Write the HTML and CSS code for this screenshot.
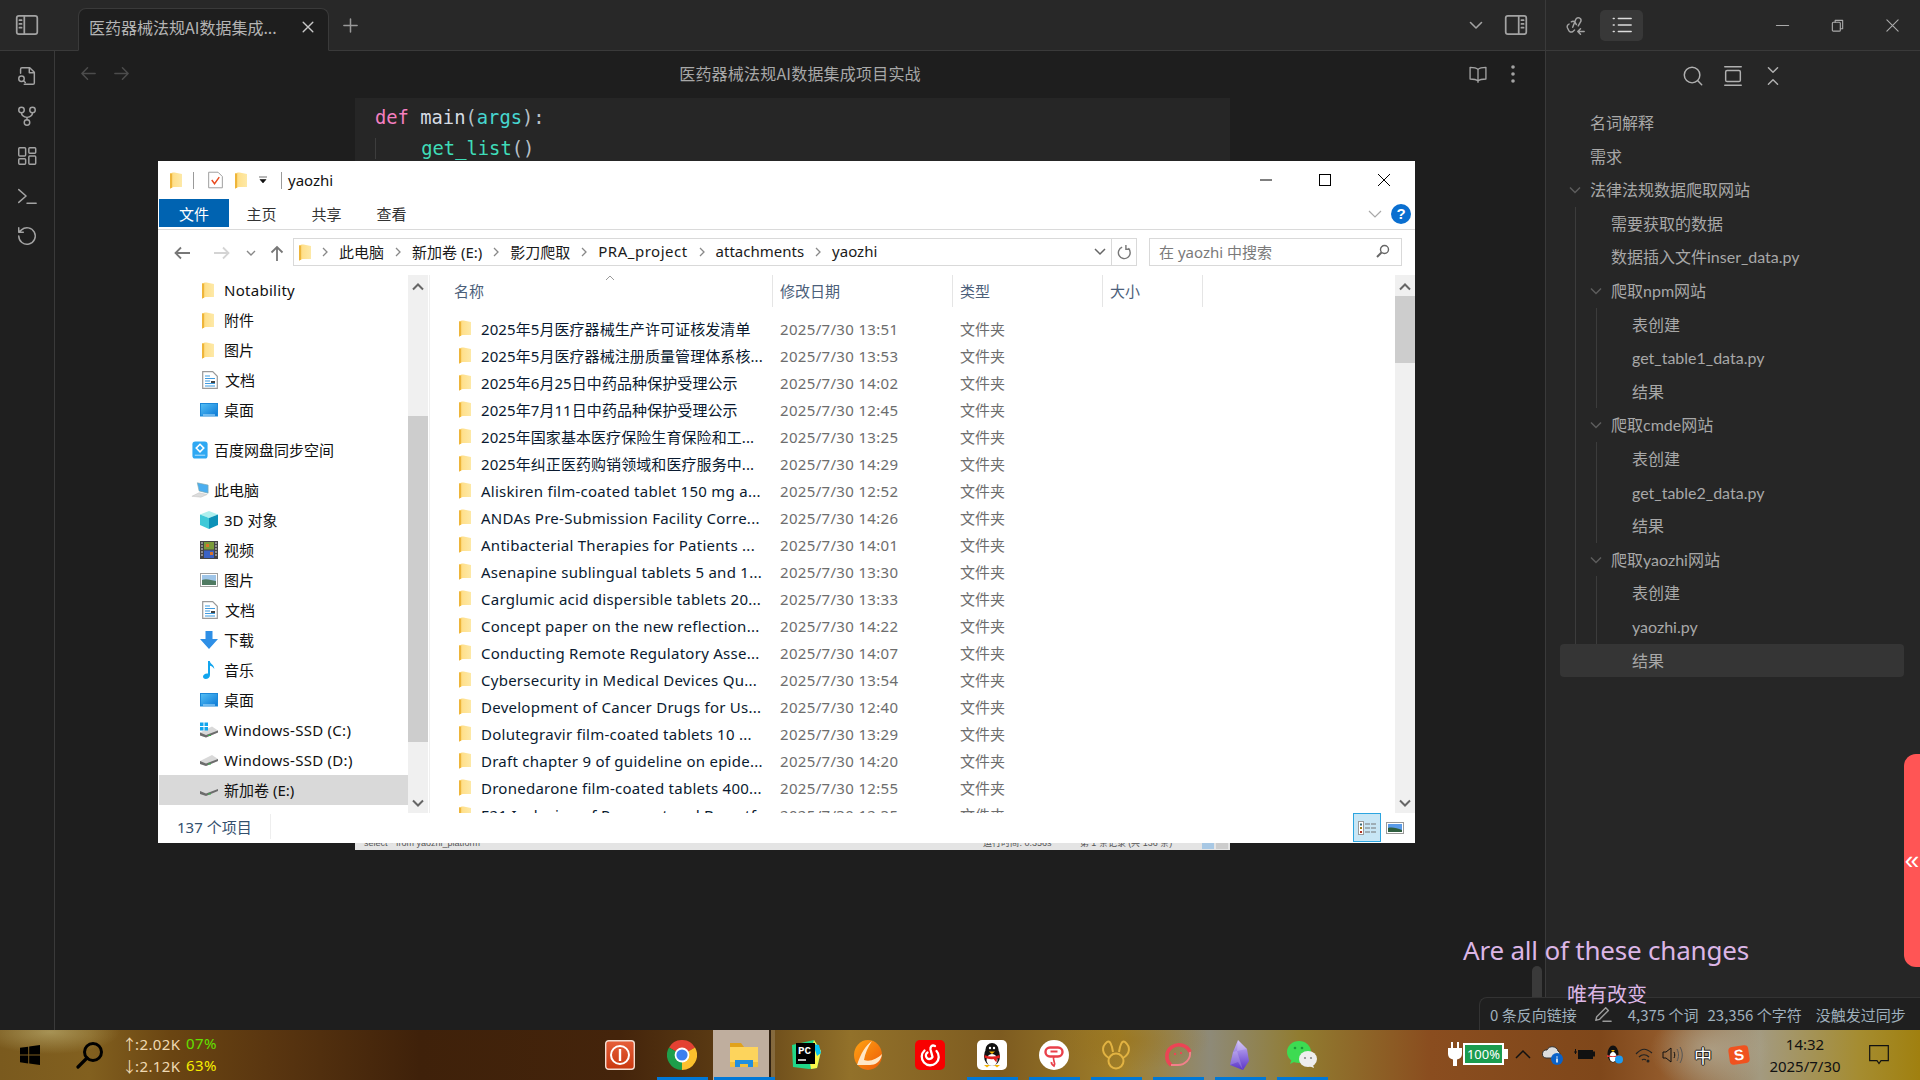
FILE: index.html
```html
<!DOCTYPE html>
<html lang="zh-CN">
<head>
<meta charset="utf-8">
<title>医药器械法规AI数据集成项目实战</title>
<link rel="stylesheet" href="styles.css">
</head>
<body>
<svg class="sprite" width="0" height="0" aria-hidden="true">
  <defs>
    <linearGradient id="gFolder" x1="0" x2="1" y1="0" y2="0"><stop offset="0" stop-color="#f3c14c"/><stop offset=".3" stop-color="#ffe08c"/><stop offset="1" stop-color="#fde9a8"/></linearGradient>
    <linearGradient id="gScreen" x1="0" x2="1" y1="0" y2="1"><stop offset="0" stop-color="#56c0f5"/><stop offset="1" stop-color="#0a78d6"/></linearGradient>
    <linearGradient id="gPower" x1="0" x2="0" y1="0" y2="1"><stop offset="0" stop-color="#e6603a"/><stop offset="1" stop-color="#c9380f"/></linearGradient>
    <linearGradient id="gLen" x1="0" x2="1" y1="0" y2="1"><stop offset="0" stop-color="#ffa313"/><stop offset="1" stop-color="#ed5b07"/></linearGradient>
    <linearGradient id="gObs" x1="0" x2="0" y1="0" y2="1"><stop offset="0" stop-color="#cdbcf7"/><stop offset="1" stop-color="#5b35c9"/></linearGradient>
    <symbol id="i-folder" viewBox="0 0 12 17"><path d="M0 1.500 3 .5h1.500L12 2v13H3.500L0 16.500z" fill="url(#gFolder)"/><path d="M0 1.500V16.500l2-.8V2z" fill="#eeb53a"/></symbol>
    <symbol id="i-doc" viewBox="0 0 16 18"><path d="M.7.7h10l4.600 4.600v12H.7z" fill="#fff" stroke="#9a9a9a" stroke-width="1.200"/><path d="M3 5h5M3 7.500h10M3 10h5M3 12.500h10M3 15h10" stroke="#3f9be0" stroke-width="1.100"/><path d="M9 10h4v2H9z" fill="#444"/></symbol>
    <symbol id="i-desk" viewBox="0 0 18 14"><rect x=".5" y=".5" width="17" height="12.500" fill="url(#gScreen)" stroke="#1c88d8"/><path d="M3 12h12" stroke="#bfe6ff"/></symbol>
    <symbol id="i-baidu" viewBox="0 0 17 19"><rect x=".5" y=".5" width="16" height="18" rx="3" fill="#2fa8f2"/><path d="M8.500 3.500 12.500 7.500 8.500 11.500 4.500 7.500z" fill="none" stroke="#fff" stroke-width="1.600"/><path d="M3 15h11" stroke="#bfe6ff"/></symbol>
    <symbol id="i-pc" viewBox="0 0 20 18"><path d="M7 1l12 2.500v9L9 10z" fill="#4aaef0" stroke="#8aa" stroke-width=".7"/><path d="M1 16 9 12l9 2-7 3z" fill="#dcdcdc" stroke="#bbb" stroke-width=".5"/></symbol>
    <symbol id="i-cube" viewBox="0 0 18 18"><path d="M9 0 18 3.500 9 7 0 3.500z" fill="#aef0ee"/><path d="M0 3.500 9 7v11L0 14z" fill="#3fc9d8"/><path d="M18 3.500 9 7v11l9-4z" fill="#0d92b8"/></symbol>
    <symbol id="i-film" viewBox="0 0 18 18"><rect width="18" height="18" fill="#444"/><path d="M4 1h10v7.500H4z" fill="#7a9b3a"/><path d="M4 9.500h10V17H4z" fill="#3a62c4"/><path d="M6 3h3v3H6zM10 11h3v3h-3z" fill="#d9752a"/><path d="M1 2h2M1 5h2M1 8h2M1 11h2M1 14h2M15 2h2M15 5h2M15 8h2M15 11h2M15 14h2" stroke="#ddd"/></symbol>
    <symbol id="i-pic" viewBox="0 0 18 14"><rect x=".5" y=".5" width="17" height="13" fill="#fff" stroke="#a0a0a0"/><path d="M2 2h14v10H2z" fill="#9fc5e8"/><path d="M2 7c4-2 9 0 14 1v4H2z" fill="#4f7a62"/></symbol>
    <symbol id="i-down" viewBox="0 0 18 18"><path d="M5.500 0h7v8H18L9 18 0 8h5.500z" fill="#2e8fe6"/></symbol>
    <symbol id="i-music" viewBox="0 0 12 18"><path d="M5 0h1.800c.3 3 4.500 3.500 4.500 8-1-2-3-3-4.300-3.200V14c0 2.500-2.200 4-4.300 4C1 18 0 17 0 15.500 0 13.500 2.500 12 5 12.500z" fill="#12a5ee"/></symbol>
    <symbol id="i-drive" viewBox="0 0 18 12"><path d="M0 7 12 1l6 4v2L6 12 0 10z" fill="#d9d9d9"/><path d="M0 7l6 2.500L18 5v2L6 12 0 10z" fill="#6c6c6c"/><path d="M8 9.500h3v1H8z" fill="#38b24a"/></symbol>
    <symbol id="i-drive-c" viewBox="0 0 18 15"><path d="M0 10 12 4l6 4v2L6 15 0 13z" fill="#d9d9d9"/><path d="M0 10l6 2.500L18 8v2L6 15 0 13z" fill="#6c6c6c"/><path d="M8 12.500h3v1H8z" fill="#38b24a"/><path d="M0 0h3.500v3.500H0zM4.500 0H8v3.500H4.500zM0 4.500h3.500V8H0zM4.500 4.500H8V8H4.500z" fill="#12a5ee"/></symbol>
    <symbol id="i-win" viewBox="0 0 20 20"><path d="M0 2.800 8.200 1.700v7.900H0zM9.200 1.500 20 0v9.600H9.200zM0 10.500h8.200v7.900L0 17.200zM9.200 10.500H20V20L9.200 18.500z"/></symbol>
  </defs>
</svg>

<div class="app">
  <header class="titlebar">
    <div class="tb-left">
      <button class="ico-btn side-toggle"><svg class="ic" viewBox="0 0 24 24"><rect x="2.500" y="3.500" width="19" height="17" rx="2"/><path d="M9.500 3.500v17M5 7.500h2M5 11h2M5 14.500h2"/></svg></button>
      <div class="tab"><span class="tab-name">医药器械法规AI数据集成...</span><svg class="ic tab-x" viewBox="0 0 16 16"><path d="M2.500 2.500l11 11M13.500 2.500l-11 11"/></svg></div>
      <svg class="ic tab-plus" viewBox="0 0 18 18"><path d="M9 2v14M2 9h14"/></svg>
      <span class="spacer"></span>
      <svg class="ic tab-drop" viewBox="0 0 16 16"><path d="M2.500 5.500 8 11l5.500-5.500"/></svg>
      <svg class="ic tab-panel" viewBox="0 0 24 24"><rect x="2.500" y="3.500" width="19" height="17" rx="2"/><path d="M14.500 3.500v17M17 7.500h2M17 11h2M17 14.500h2"/></svg>
    </div>
    <div class="tb-right">
      <svg class="ic link-ic" viewBox="0 0 24 24"><path d="M9.500 14.500 13 5.500a3 3 0 0 1 5.500 2.200L15.500 13M5.500 11a3 3 0 0 0-1.800 4l1.500 3a3 3 0 0 0 4.300 1.300l2-1.800M8 8.500a3 3 0 0 1 4 .5l1.500 2.500M15 19h7M15 19l3-3M15 19l3 3"/></svg>
      <span class="list-btn"><svg class="ic" viewBox="0 0 24 24"><path d="M8 5h14M8 12h14M8 19h14M2.500 5h1M2.500 12h1M2.500 19h1"/></svg></span>
      <span class="spacer"></span>
      <span class="win-btn"><svg class="ic" viewBox="0 0 16 16"><path d="M1.500 8h13"/></svg></span>
      <span class="win-btn"><svg class="ic" viewBox="0 0 16 16"><rect x="2.500" y="4.500" width="8.500" height="9.500" rx="1"/><path d="M5.500 4.500V2.500h8v9H11"/></svg></span>
      <span class="win-btn"><svg class="ic" viewBox="0 0 16 16"><path d="M2 2l12 12M14 2 2 14"/></svg></span>
    </div>
  </header>

  <div class="workspace">
    <nav class="ribbon">
      <svg class="ic" viewBox="0 0 24 24"><path d="M5 9V4.500A1.500 1.500 0 0 1 6.500 3H15l5 5v11.500a1.500 1.500 0 0 1-1.500 1.500H9M14.500 3v5.500H20"/><circle cx="6" cy="15" r="3"/><path d="m8.200 17.200 2 2"/></svg>
      <svg class="ic" viewBox="0 0 24 24"><circle cx="6" cy="5.500" r="3"/><circle cx="18" cy="5.500" r="3"/><circle cx="12" cy="19" r="3"/><path d="M6 8.500c0 3 2 4.500 6 5v2.500M18 8.500c0 3-2 4.500-6 5"/></svg>
      <svg class="ic" viewBox="0 0 24 24"><rect x="3" y="3" width="7.500" height="9" rx="1"/><rect x="14" y="3" width="7.500" height="6" rx="1"/><rect x="3" y="15" width="7.500" height="6" rx="1"/><rect x="14" y="12" width="7.500" height="9" rx="1"/></svg>
      <svg class="ic" viewBox="0 0 24 24"><path d="m3 5 8 7-8 7M12 20h10"/></svg>
      <svg class="ic" viewBox="0 0 24 24"><path d="M3 12a9 9 0 1 0 3-6.700L3 8M3 3v5h5"/></svg>
    </nav>

    <main class="editor">
      <div class="view-head">
        <svg class="ic nav-a" viewBox="0 0 18 18"><path d="M16 9H2M8 3 2 9l6 6"/></svg>
        <svg class="ic nav-a" viewBox="0 0 18 18"><path d="M2 9h14M10 3l6 6-6 6"/></svg>
        <span class="view-title">医药器械法规AI数据集成项目实战</span>
        <svg class="ic book" viewBox="0 0 24 24"><path d="M12 6.500c-2-2-5-2.500-9.500-2.500v14c4.500 0 7.500.5 9.500 2.500 2-2 5-2.500 9.500-2.500V4c-4.500 0-7.500.5-9.500 2.500zM12 6.500V22"/></svg>
        <svg class="dots" viewBox="0 0 6 20"><circle cx="3" cy="3" r="1.800"/><circle cx="3" cy="10" r="1.800"/><circle cx="3" cy="17" r="1.800"/></svg>
      </div>
      <div class="code-block">
        <pre class="code"><span class="k">def</span> <span class="fn">main</span>(<span class="arg">args</span>):
<span class="indent">    </span><span class="call">get_list</span>()</pre>
        <div class="strip">
          <span class="sql">select * from yaozhi_platform</span>
          <span class="run">运行时间: 0.356s</span>
          <span class="rec">第 1 条记录 (共 136 条)</span>
          <span class="strip-b on"></span><span class="strip-b"></span>
        </div>
      </div>
    </main>

    <aside class="outline">
      <div class="outline-tools">
        <svg class="ic" viewBox="0 0 24 24"><circle cx="11" cy="11" r="8.500"/><path d="m17.500 17.500 4 4"/></svg>
        <svg class="ic" viewBox="0 0 24 24"><path d="M3 2h18M3 22h18"/><rect x="4" y="6" width="16" height="12" rx="1.500"/></svg>
        <svg class="ic" viewBox="0 0 24 24"><path d="m7 3 5 5 5-5M7 21l5-5 5 5"/></svg>
      </div>
      <div class="toc">
        <div class="row">名词解释</div>
        <div class="row">需求</div>
        <div class="row"><svg class="chev" viewBox="0 0 12 12"><path d="M1 3.500 6 8.500l5-5"/></svg>法律法规数据爬取网站</div>
        <div class="kids">
          <div class="row">需要获取的数据</div>
          <div class="row">数据插入文件inser_data.py</div>
          <div class="row"><svg class="chev" viewBox="0 0 12 12"><path d="M1 3.500 6 8.500l5-5"/></svg>爬取npm网站</div>
          <div class="kids">
            <div class="row">表创建</div>
            <div class="row">get_table1_data.py</div>
            <div class="row">结果</div>
          </div>
          <div class="row"><svg class="chev" viewBox="0 0 12 12"><path d="M1 3.500 6 8.500l5-5"/></svg>爬取cmde网站</div>
          <div class="kids">
            <div class="row">表创建</div>
            <div class="row">get_table2_data.py</div>
            <div class="row">结果</div>
          </div>
          <div class="row"><svg class="chev" viewBox="0 0 12 12"><path d="M1 3.500 6 8.500l5-5"/></svg>爬取yaozhi网站</div>
          <div class="kids">
            <div class="row">表创建</div>
            <div class="row">yaozhi.py</div>
            <div class="row current">结果</div>
          </div>
        </div>
      </div>
      <div class="scroll-nub"></div>
    </aside>
  </div>
</div>

<section class="explorer">
  <div class="ex-title">
    <svg class="fld"><use href="#i-folder"/></svg>
    <span class="qsep"></span>
    <svg class="qdoc" viewBox="0 0 16 18"><path d="M.7.7h10l4.600 4.600v12H.7z" fill="#fff" stroke="#999"/><path d="m4 9 3 4 5-7" fill="none" stroke="#e8491d" stroke-width="1.500"/></svg>
    <svg class="fld"><use href="#i-folder"/></svg>
    <svg class="qdrop" viewBox="0 0 8 8"><path d="M0 1h8M1 3.500h6L4 7z" fill="#111" stroke="#111" stroke-width=".6"/></svg>
    <span class="qsep"></span>
    <span class="ex-name">yaozhi</span>
    <span class="spacer"></span>
    <span class="cap"><svg viewBox="0 0 14 14"><path d="M1 7h12"/></svg></span>
    <span class="cap"><svg viewBox="0 0 14 14"><rect x="1.500" y="1.500" width="11" height="11"/></svg></span>
    <span class="cap"><svg viewBox="0 0 14 14"><path d="m1 1 12 12M13 1 1 13"/></svg></span>
  </div>
  <div class="ex-ribbon">
    <span class="rtab file">文件</span><span class="rtab">主页</span><span class="rtab">共享</span><span class="rtab">查看</span>
    <span class="spacer"></span>
    <svg class="r-chev" viewBox="0 0 14 8"><path d="m1 1 6 6 6-6"/></svg>
    <span class="help">?</span>
  </div>
  <div class="ex-address">
    <svg class="nav-ic" viewBox="0 0 16 14"><path d="M16 7H2M7 1.500 1.500 7 7 12.500"/></svg>
    <svg class="nav-ic off" viewBox="0 0 16 14"><path d="M0 7h14M9 1.500 14.500 7 9 12.500"/></svg>
    <svg class="nav-drop" viewBox="0 0 10 6"><path d="m1 1 4 4 4-4"/></svg>
    <svg class="nav-up" viewBox="0 0 14 16"><path d="M7 16V2M1.500 7.500 7 2l5.500 5.500"/></svg>
    <div class="addr">
      <svg class="fld"><use href="#i-folder"/></svg>
      <svg class="crumb-c" viewBox="0 0 6 10"><path d="m1 1 4 4-4 4"/></svg><span class="crumb">此电脑</span>
      <svg class="crumb-c" viewBox="0 0 6 10"><path d="m1 1 4 4-4 4"/></svg><span class="crumb">新加卷 (E:)</span>
      <svg class="crumb-c" viewBox="0 0 6 10"><path d="m1 1 4 4-4 4"/></svg><span class="crumb">影刀爬取</span>
      <svg class="crumb-c" viewBox="0 0 6 10"><path d="m1 1 4 4-4 4"/></svg><span class="crumb lat">PRA_project</span>
      <svg class="crumb-c" viewBox="0 0 6 10"><path d="m1 1 4 4-4 4"/></svg><span class="crumb">attachments</span>
      <svg class="crumb-c" viewBox="0 0 6 10"><path d="m1 1 4 4-4 4"/></svg><span class="crumb">yaozhi</span>
      <span class="spacer"></span>
      <svg class="addr-drop" viewBox="0 0 12 8"><path d="m1 1 5 5 5-5"/></svg>
      <span class="addr-ref"><svg viewBox="0 0 16 16"><path d="M12 3.500A6.300 6.300 0 1 1 5.500 2.300M9.500 0v4.500H14"/></svg></span>
    </div>
    <div class="search"><span>在 yaozhi 中搜索</span><svg viewBox="0 0 14 14"><circle cx="8.500" cy="5.500" r="4"/><path d="M5.500 8.500 1 13" stroke-width="2"/></svg></div>
  </div>
  <div class="ex-body">
    <div class="nav-pane">
      <ul class="nav-tree">
        <li class="n lat"><svg class="fld"><use href="#i-folder"/></svg>Notability</li>
        <li class="n"><svg class="fld"><use href="#i-folder"/></svg>附件</li>
        <li class="n"><svg class="fld"><use href="#i-folder"/></svg>图片</li>
        <li class="n"><svg class="ni d"><use href="#i-doc"/></svg>文档</li>
        <li class="n"><svg class="ni"><use href="#i-desk"/></svg>桌面</li>
        <li class="n top"><svg class="ni"><use href="#i-baidu"/></svg>百度网盘同步空间</li>
        <li class="n top"><svg class="ni"><use href="#i-pc"/></svg>此电脑</li>
        <li class="n"><svg class="ni"><use href="#i-cube"/></svg>3D 对象</li>
        <li class="n"><svg class="ni"><use href="#i-film"/></svg>视频</li>
        <li class="n"><svg class="ni"><use href="#i-pic"/></svg>图片</li>
        <li class="n"><svg class="ni d"><use href="#i-doc"/></svg>文档</li>
        <li class="n"><svg class="ni"><use href="#i-down"/></svg>下载</li>
        <li class="n"><svg class="ni"><use href="#i-music"/></svg>音乐</li>
        <li class="n"><svg class="ni"><use href="#i-desk"/></svg>桌面</li>
        <li class="n lat"><svg class="ni"><use href="#i-drive-c"/></svg>Windows-SSD (C:)</li>
        <li class="n lat"><svg class="ni"><use href="#i-drive"/></svg>Windows-SSD (D:)</li>
        <li class="n sel"><svg class="ni"><use href="#i-drive"/></svg>新加卷 (E:)</li>
      </ul>
      <div class="vbar nav-bar">
        <svg class="va" viewBox="0 0 12 8"><path d="m1 6.500 5-5 5 5"/></svg>
        <span class="vthumb"></span>
        <span class="spacer"></span>
        <svg class="va" viewBox="0 0 12 8"><path d="m1 1.500 5 5 5-5"/></svg>
      </div>
    </div>
    <div class="list">
      <div class="heads">
        <span class="h h-name">名称<svg class="sort" viewBox="0 0 10 6"><path d="m1 5 4-4 4 4"/></svg></span>
        <span class="h h-date">修改日期</span>
        <span class="h h-type">类型</span>
        <span class="h h-size">大小</span>
      </div>
      <div class="rows">
        <div class="f"><svg class="fld"><use href="#i-folder"/></svg><span class="f-n cjk">2025年5月医疗器械生产许可证核发清单</span><span class="f-d">2025/7/30 13:51</span><span class="f-t">文件夹</span></div>
        <div class="f"><svg class="fld"><use href="#i-folder"/></svg><span class="f-n cjk">2025年5月医疗器械注册质量管理体系核...</span><span class="f-d">2025/7/30 13:53</span><span class="f-t">文件夹</span></div>
        <div class="f"><svg class="fld"><use href="#i-folder"/></svg><span class="f-n cjk">2025年6月25日中药品种保护受理公示</span><span class="f-d">2025/7/30 14:02</span><span class="f-t">文件夹</span></div>
        <div class="f"><svg class="fld"><use href="#i-folder"/></svg><span class="f-n cjk">2025年7月11日中药品种保护受理公示</span><span class="f-d">2025/7/30 12:45</span><span class="f-t">文件夹</span></div>
        <div class="f"><svg class="fld"><use href="#i-folder"/></svg><span class="f-n cjk">2025年国家基本医疗保险生育保险和工...</span><span class="f-d">2025/7/30 13:25</span><span class="f-t">文件夹</span></div>
        <div class="f"><svg class="fld"><use href="#i-folder"/></svg><span class="f-n cjk">2025年纠正医药购销领域和医疗服务中...</span><span class="f-d">2025/7/30 14:29</span><span class="f-t">文件夹</span></div>
        <div class="f"><svg class="fld"><use href="#i-folder"/></svg><span class="f-n">Aliskiren film-coated tablet 150 mg a...</span><span class="f-d">2025/7/30 12:52</span><span class="f-t">文件夹</span></div>
        <div class="f"><svg class="fld"><use href="#i-folder"/></svg><span class="f-n">ANDAs Pre-Submission Facility Corre...</span><span class="f-d">2025/7/30 14:26</span><span class="f-t">文件夹</span></div>
        <div class="f"><svg class="fld"><use href="#i-folder"/></svg><span class="f-n">Antibacterial Therapies for Patients ...</span><span class="f-d">2025/7/30 14:01</span><span class="f-t">文件夹</span></div>
        <div class="f"><svg class="fld"><use href="#i-folder"/></svg><span class="f-n">Asenapine sublingual tablets 5 and 1...</span><span class="f-d">2025/7/30 13:30</span><span class="f-t">文件夹</span></div>
        <div class="f"><svg class="fld"><use href="#i-folder"/></svg><span class="f-n">Carglumic acid dispersible tablets 20...</span><span class="f-d">2025/7/30 13:33</span><span class="f-t">文件夹</span></div>
        <div class="f"><svg class="fld"><use href="#i-folder"/></svg><span class="f-n">Concept paper on the new reflection...</span><span class="f-d">2025/7/30 14:22</span><span class="f-t">文件夹</span></div>
        <div class="f"><svg class="fld"><use href="#i-folder"/></svg><span class="f-n">Conducting Remote Regulatory Asse...</span><span class="f-d">2025/7/30 14:07</span><span class="f-t">文件夹</span></div>
        <div class="f"><svg class="fld"><use href="#i-folder"/></svg><span class="f-n">Cybersecurity in Medical Devices Qu...</span><span class="f-d">2025/7/30 13:54</span><span class="f-t">文件夹</span></div>
        <div class="f"><svg class="fld"><use href="#i-folder"/></svg><span class="f-n">Development of Cancer Drugs for Us...</span><span class="f-d">2025/7/30 12:40</span><span class="f-t">文件夹</span></div>
        <div class="f"><svg class="fld"><use href="#i-folder"/></svg><span class="f-n">Dolutegravir film-coated tablets 10 ...</span><span class="f-d">2025/7/30 13:29</span><span class="f-t">文件夹</span></div>
        <div class="f"><svg class="fld"><use href="#i-folder"/></svg><span class="f-n">Draft chapter 9 of guideline on epide...</span><span class="f-d">2025/7/30 14:20</span><span class="f-t">文件夹</span></div>
        <div class="f"><svg class="fld"><use href="#i-folder"/></svg><span class="f-n">Dronedarone film-coated tablets 400...</span><span class="f-d">2025/7/30 12:55</span><span class="f-t">文件夹</span></div>
        <div class="f"><svg class="fld"><use href="#i-folder"/></svg><span class="f-n">E21 Inclusion of Pregnant and Breastf...</span><span class="f-d">2025/7/30 12:35</span><span class="f-t">文件夹</span></div>
      </div>
    </div>
    <div class="vbar list-bar">
      <svg class="va" viewBox="0 0 12 8"><path d="m1 6.500 5-5 5 5"/></svg>
      <span class="vthumb"></span>
      <span class="spacer"></span>
      <svg class="va" viewBox="0 0 12 8"><path d="m1 1.500 5 5 5-5"/></svg>
    </div>
  </div>
  <div class="ex-status">
    <span class="count">137 个项目</span>
    <span class="spacer"></span>
    <span class="vw on"><svg viewBox="0 0 18 14"><rect x=".5" y=".5" width="5" height="13" fill="#fff" stroke="#999"/><path d="M2 2.500h2v2H2z" fill="#3a6a7a"/><path d="M2 6h2v2H2z" fill="#a07a10"/><path d="M2 10h2v2H2z" fill="#b03020"/><path d="M7 3h5M13 3h5M7 7h5M13 7h5M7 11h5M13 11h5" stroke="#777"/></svg></span>
    <span class="vw"><svg viewBox="0 0 18 12"><rect x=".5" y=".5" width="17" height="11" fill="#fff" stroke="#999"/><path d="M2 2h14v8H2z" fill="#5a9be8"/><path d="M2 6c4-1 9 0 14 2v2H2z" fill="#2f5f3f"/></svg></span>
  </div>
</section>

<div class="pet-tab">«</div>
<div class="lyric-en">Are all of these changes</div>

<div class="statusbar">
  <span class="lyric-zh">唯有改变</span>
  <span>0 条反向链接</span>
  <svg class="ic pen" viewBox="0 0 20 20"><path d="M3 13 13 3l3 3L6 16l-4 1zM10 18h9"/></svg>
  <span>4,375 个词</span>
  <span class="s2">23,356 个字符</span>
  <span class="s3">没触发过同步</span>
</div>

<footer class="taskbar">
  <div class="t-start"><svg><use href="#i-win"/></svg></div>
  <div class="t-search"><svg viewBox="0 0 28 28"><circle cx="17" cy="11" r="8.500" fill="none" stroke="#000" stroke-width="3"/><path d="M11 17 2 26" stroke="#000" stroke-width="3.200" stroke-linecap="round"/></svg></div>
  <div class="t-net">
    <div class="net-l"><span class="net-v"><span class="arr">↑</span>:2.02K</span><span class="g">07%</span></div>
    <div class="net-l"><span class="net-v"><span class="arr">↓</span>:2.12K</span><span class="y">63%</span></div>
  </div>
  <div class="t-apps">
    <div class="app-c"><svg viewBox="0 0 30 30"><rect x=".7" y=".7" width="28.600" height="28.600" rx="3" fill="url(#gPower)" stroke="#f3ddd2" stroke-width="1.400"/><circle cx="15" cy="15" r="9" fill="none" stroke="#fff" stroke-width="2"/><path d="M15 9v12" stroke="#fff" stroke-width="2.400"/></svg></div>
    <div class="app-c run"><svg viewBox="0 0 30 30"><path d="M15 15 2 7.500A15 15 0 0 1 28 7.500z" fill="#e34133"/><path d="M15 15 28 7.500A15 15 0 0 1 15 30z" fill="#fbc02d"/><path d="M15 15V30A15 15 0 0 1 2 7.500z" fill="#1e9e4a"/><circle cx="15" cy="15" r="7.400" fill="#fff"/><circle cx="15" cy="15" r="5.600" fill="#3d7ff0"/></svg></div>
    <div class="app-c active"><svg viewBox="0 0 30 30"><path d="M1 3h11l3 4H1z" fill="#e0a21c"/><path d="M1 7h28v20H1z" fill="#fdd45c"/><path d="M1 22h28v5H1z" fill="#f0c040"/><path d="M6 27V20h18v7h-5v-3h-8v3z" fill="#1f8fe0"/></svg></div>
    <div class="app-c"><svg viewBox="0 0 30 30"><path d="M1 5 23 0l7 11-4 17-8 1-16-2z" fill="#21d789"/><path d="M23 0l7 11-4 17-6 1-2-12z" fill="#fcf84a"/><path d="M22 4l6 1 2 8-4 3z" fill="#07c3f2"/><rect x="5" y="3" width="19" height="21" fill="#000"/><text x="7" y="14" class="pc-t">PC</text><path d="M7 20h8" stroke="#fff" stroke-width="1.500"/></svg></div>
    <div class="app-c"><svg viewBox="0 0 30 30"><ellipse cx="15" cy="15" rx="14" ry="15" fill="url(#gLen)"/><path d="M4 25C8 13 12 6 19 1c-4 6-7 12-8 19 6 2 13-1 18-6-1 8-7 11-12 11-5 0-9 0-13 0z" fill="#ffe7c6"/></svg></div>
    <div class="app-c"><svg viewBox="0 0 30 30"><rect width="30" height="30" rx="5" fill="#f90000"/><path d="M20 6c-3-1.500-5 .5-4.500 3.500l2 7.500a3.500 3.500 0 1 1-5-4.500M9.500 10.500a8.500 8.500 0 1 0 12 .5" fill="none" stroke="#fff" stroke-width="2.300" stroke-linecap="round"/></svg></div>
    <div class="app-c run"><svg viewBox="0 0 30 30"><rect width="30" height="30" rx="5" fill="#fff"/><ellipse cx="15" cy="16" rx="8" ry="10" fill="#111"/><circle cx="15" cy="9.500" r="6.500" fill="#111"/><ellipse cx="15" cy="20" rx="5.500" ry="6" fill="#fff"/><circle cx="13" cy="8" r="1.200" fill="#fff"/><circle cx="17" cy="8" r="1.200" fill="#fff"/><path d="M12 11.500h6L15 14z" fill="#f7b500"/><path d="M7.500 15c5 2 10 2 15 0l.5 3-3 .5-.5 4-3-3.500c-3 .5-6 0-9-1.500z" fill="#e02020"/><path d="M7 25h6l-3 2.500zM17 25h6l-3 2.500z" fill="#f7b500"/></svg></div>
    <div class="app-c run"><svg viewBox="0 0 30 30"><circle cx="15" cy="15" r="15" fill="#fff"/><rect x="6.500" y="7.500" width="17" height="9" rx="4.500" fill="none" stroke="#e9404a" stroke-width="2.400"/><path d="M11.500 11.500h7M15 16.500c-2.500 3.500 2.500 5.500 0 9.500-1.500-1-3-2-2.500-4" fill="none" stroke="#e9404a" stroke-width="1.800"/></svg></div>
    <div class="app-c run"><svg viewBox="0 0 30 30"><circle cx="15" cy="21" r="7.500" fill="none" stroke="#e2b342" stroke-width="2"/><path d="M8 18C1 14 0 7 6 2c3-2 5 3 6 10M22 18c7-4 8-11 2-16-3-2-5 3-6 10" fill="none" stroke="#e2b342" stroke-width="2"/></svg></div>
    <div class="app-c run"><svg viewBox="0 0 30 30"><path d="M8 25A12 11.500 0 1 1 27 12" fill="none" stroke="#ec4455" stroke-width="3.600"/><path d="M27 12c1 7-5 13-12 13-3 0-5 0-7 0" fill="none" stroke="#f3808a" stroke-width="2"/><path d="M12 13v2M18 12v2" stroke="#ec4455" stroke-width="2"/></svg></div>
    <div class="app-c run"><svg viewBox="0 0 30 30"><path d="M13 0l9 9 2 12-6 9-13-5 3-13z" fill="url(#gObs)"/><path d="M13 0l-1 11 10-2zM12 11 8 12l-3 13 8-3 5 8z" fill="#fff" fill-opacity=".18"/></svg></div>
    <div class="app-c run"><svg viewBox="0 0 30 30"><ellipse cx="12" cy="12" rx="12" ry="11" fill="#3ddb52"/><path d="M5 19 3 24l6-3z" fill="#3ddb52"/><circle cx="8" cy="8" r="1.300" fill="#1a9c3a"/><circle cx="15" cy="8" r="1.300" fill="#1a9c3a"/><ellipse cx="21" cy="19" rx="9" ry="8" fill="#eee"/><path d="M26 25l1 3-5-2z" fill="#eee"/><circle cx="18" cy="18" r="1.100" fill="#888"/><circle cx="24" cy="18" r="1.100" fill="#888"/></svg></div>
  </div>
  <div class="t-tray">
    <svg class="tr plug" viewBox="0 0 14 24"><path d="M3 0h2v6H3zM9 0h2v6H9zM0 6h14v6c0 3-2 5-5 5.500V24H5v-6.500C2 17 0 15 0 12z" fill="#fff"/></svg>
    <span class="batt"><span class="batt-t">100%</span></span>
    <svg class="tr caret" viewBox="0 0 16 10"><path d="m1 9 7-7 7 7" fill="none" stroke="#111" stroke-width="1.500"/></svg>
    <svg class="tr cloud" viewBox="0 0 22 20"><path d="M4 13a4 4 0 0 1 1-8c2-5 10-4 11 1a4 4 0 0 1 0 7z" fill="#ddd" stroke="#333"/><circle cx="15" cy="14" r="6" fill="#0a62c9"/><path d="M15 11.500v1M15 13.500v4" stroke="#fff" stroke-width="1.500"/></svg>
    <svg class="tr bat2" viewBox="0 0 22 14"><path d="M5 3h15v9H5z" fill="#111"/><path d="M20 5h2v4h-2zM1 5h3M2.500 2v5" fill="#111" stroke="#111"/></svg>
    <svg class="tr qq" viewBox="0 0 18 20"><ellipse cx="8" cy="9" rx="5.500" ry="8.500" fill="#111"/><ellipse cx="8" cy="12" rx="3.500" ry="5" fill="#fff"/><path d="M2 10c4 1.500 8 1.500 12 0v2H2z" fill="#d33"/><path d="M6 5h4L8 7z" fill="#f7b500"/><circle cx="14" cy="14.500" r="4" fill="#1e9bf0"/></svg>
    <svg class="tr wifi" viewBox="0 0 18 16"><path d="M1 7c1-1 1-1 1-1C7 1 11 1 17 6M4 10c3-3 7-3 10 0M7 13c1-1 3-1 4 0" fill="none" stroke="#222" stroke-width="1.200"/><circle cx="13" cy="14" r="1.500" fill="#222"/></svg>
    <svg class="tr snd" viewBox="0 0 22 18"><path d="M1 6h3l5-4v14l-5-4H1z" fill="none" stroke="#111"/><path d="M12 6c1 2 1 4 0 6" fill="none" stroke="#111"/><path d="M15 3c2 4 2 8 0 12M18 1c3 5 3 11 0 16" fill="none" stroke="#555"/></svg>
    <span class="ime">中</span>
    <span class="sogou">S</span>
    <div class="clock"><span>14:32</span><span>2025/7/30</span></div>
    <svg class="tr note" viewBox="0 0 20 20"><path d="M.7.7h18.600v15H12L10 18.500 8 15.700H.7z" fill="none" stroke="#111" stroke-width="1.200"/></svg>
  </div>
</footer>
</body>
</html>
```

FILE: styles.css
```css
* { box-sizing: border-box; }
html, body { margin: 0; padding: 0; }
body {
  width: 1920px; height: 1080px; overflow: hidden; position: relative;
  display: flex; flex-direction: column; background: #1e1e1e;
  font-family: "Noto Sans", "Noto Sans CJK SC", sans-serif;
}
.sprite { position: absolute; }
.spacer { flex: 1; }
button { background: none; border: 0; padding: 0; }
.ic { fill: none; stroke: #a3a3a3; stroke-width: 1.600; stroke-linecap: round; stroke-linejoin: round; flex: none; }

.app { height: 1030px; display: flex; flex-direction: column; }
.titlebar { height: 51px; display: flex; background: #282828; border-bottom: 1px solid #3a3a3a; flex: none; }
.tb-left { width: 1545px; display: flex; align-items: center; position: relative; }
.side-toggle { width: 54px; display: flex; justify-content: center; }
.side-toggle .ic { width: 26px; height: 26px; }
.tab {
  width: 251px; height: 43px; margin: 8px 0 -1px 24px; align-self: flex-start; display: flex; align-items: center;
  padding: 0 13px 6px 10px; background: #1e1e1e; border: 1px solid #3a3a3a; border-bottom: 1px solid #1e1e1e; border-radius: 8px 8px 0 0;
}
.tab-name { flex: 1; font-size: 16px; color: #b4b4b4; white-space: nowrap; font-family: "Noto Sans CJK SC", "Noto Sans", sans-serif; }
.tab-x { width: 14px; height: 14px; stroke: #c8c8c8; }
.tab-plus { width: 17px; height: 17px; margin-left: 13px; stroke: #999; }
.tab-drop { width: 16px; height: 16px; margin-right: 19px; }
.tab-panel { width: 26px; height: 26px; margin-right: 16px; }
.tb-right { flex: 1; display: flex; align-items: center; border-left: 1px solid #3a3a3a; padding-left: 18px; }
.link-ic { width: 22px; height: 22px; }
.list-btn { width: 43px; height: 31px; margin-left: 14px; border-radius: 5px; background: #383838; display: flex; align-items: center; justify-content: center; }
.list-btn .ic { width: 22px; height: 22px; stroke: #dcdcdc; }
.win-btn { width: 55px; display: flex; justify-content: center; }
.win-btn .ic { width: 15px; height: 15px; stroke-width: 1.200; stroke: #aaa; }

.workspace { flex: 1; display: flex; min-height: 0; }
.ribbon { width: 55px; flex: none; border-right: 1px solid #3a3a3a; background: #1f1f1f; display: flex; flex-direction: column; align-items: center; gap: 18px; padding-top: 14px; }
.ribbon .ic { width: 22px; height: 22px; }
.editor { flex: 1; display: flex; flex-direction: column; background: #1e1e1e; min-width: 0; }
.view-head { height: 47px; flex: none; display: flex; align-items: center; padding: 0 0 2px 25px; position: relative; }
.nav-a { width: 17px; height: 17px; stroke: #4c4c4c; margin-right: 16px; }
.view-title { position: absolute; left: 0; right: 0; top: 0; height: 47px; line-height: 45px; text-align: center; font-size: 16px; letter-spacing: .2px; color: #a8a8a8; font-family: "Noto Sans CJK SC", sans-serif; }
.book { width: 20px; height: 20px; margin-left: auto; position: relative; }
.dots { width: 6px; height: 20px; margin: 0 29px 0 22px; fill: #a3a3a3; position: relative; }
.code-block { margin-left: 300px; width: 875px; height: 752px; background: #262626; display: flex; flex-direction: column; flex: none; }
.code { margin: 0; flex: 1; padding: 4px 0 0 20px; font: 18.800px/31px "DejaVu Sans Mono", monospace; color: #b8c0c8; }
.k { color: #f47fc0; }
.fn { color: #d6dde4; }
.arg { color: #47d6d0; }
.call { color: #3fdcb8; }
.indent { box-shadow: inset 1px 0 #3d3d3d; margin-right: 1px; }
.strip { height: 14px; background: #e4e4e4; display: flex; align-items: center; font: 9px/14px "Liberation Sans", sans-serif; color: #555; padding-left: 9px; }
.sql { width: 623px; }
.run { width: 97px; }
.rec { width: 123px; }
.strip-b { width: 12px; height: 12px; background: #ccc; margin-right: 2px; }
.strip-b.on { background: #a8c8e4; }

.outline { width: 375px; flex: none; background: #262626; border-left: 1px solid #3a3a3a; position: relative; }
.outline-tools { height: 55px; display: flex; justify-content: center; align-items: center; gap: 18px; padding-bottom: 5px; }
.outline-tools .ic { width: 22px; height: 22px; stroke: #b0b0b0; }
.toc { padding: 0 16px 0 9px; font-size: 16px; color: #a8a8a8; font-family: "Lato", "Noto Sans CJK SC", sans-serif; }
.row { height: 33.600px; line-height: 33.600px; padding-left: 35px; position: relative; white-space: nowrap; }
.kids { margin-left: 20px; border-left: 1px solid #3c3c3c; }
.chev { position: absolute; left: 14px; top: 11px; width: 12px; height: 12px; fill: none; stroke: #5c5c5c; stroke-width: 1.500; }
.current { background: #353535; border-radius: 4px; margin-left: -37px; padding-left: 72px; }
.scroll-nub { position: absolute; left: -14px; top: 915px; width: 10px; height: 60px; background: #3a3a3a; border-radius: 5px; }

/* explorer window */
.explorer {
  position: absolute; left: 158px; top: 161px; width: 1257px; height: 682px; background: #fff;
  display: flex; flex-direction: column; color: #000;
  font-family: "Noto Sans", "Noto Sans CJK SC", sans-serif; font-size: 15px;
}
.fld { width: 12px; height: 17px; flex: none; }
.ex-title { height: 38px; flex: none; display: flex; align-items: center; padding: 0 2px 0 12px; }
.qsep { width: 1px; height: 17px; background: #9a9a9a; margin: 0 14px 0 11px; flex: none; }
.qdoc { width: 15px; height: 18px; margin-right: 12px; }
.qdrop { width: 8px; height: 8px; margin: 0 3px 0 12px; }
.ex-name { font-size: 15px; color: #111; margin-left: -8px; }
.cap { width: 59px; height: 38px; display: flex; align-items: center; justify-content: center; }
.cap svg { width: 14px; height: 14px; fill: none; stroke: #000; stroke-width: 1; }
.ex-ribbon { height: 31px; flex: none; display: flex; border-bottom: 1px solid #dadada; padding-left: 1px; }
.rtab { height: 28px; width: 65px; line-height: 30px; text-align: center; font-size: 15px; color: #333; font-family: "Noto Sans CJK SC", sans-serif; }
.rtab.file { width: 70px; background: #0063b1; color: #fff; }
.r-chev { width: 14px; height: 8px; margin: 11px 9px 0 0; fill: none; stroke: #a8a8a8; stroke-width: 1.200; }
.help { width: 20px; height: 20px; margin: 5px 4px 0 0; border-radius: 50%; background: #0a6fd0; color: #fff; font: 700 15px/20px "Liberation Sans", sans-serif; text-align: center; }
.ex-address { height: 45px; flex: none; display: flex; align-items: flex-start; position: relative; padding: 8px 13px 0 135px; }
.nav-ic { position: absolute; left: 16px; top: 16px; width: 16px; height: 14px; fill: none; stroke: #777; stroke-width: 1.800; }
.nav-ic.off { left: 56px; stroke: #d4d4d4; }
.nav-drop { position: absolute; left: 88px; top: 20px; width: 10px; height: 6px; fill: none; stroke: #888; stroke-width: 1.400; }
.nav-up { position: absolute; left: 112px; top: 15px; width: 14px; height: 16px; fill: none; stroke: #777; stroke-width: 1.800; }
.addr { width: 844px; height: 28px; border: 1px solid #d9d9d9; display: flex; align-items: center; padding: 0 0 2px 5px; color: #1a1a1a; }
.addr .fld, .addr svg, .addr-ref { position: relative; top: 1px; }
.crumb-c { width: 6px; height: 10px; fill: none; stroke: #888; stroke-width: 1.300; margin: 0 11px; flex: none; }
.crumb { white-space: nowrap; }
.crumb.lat { letter-spacing: .5px; }
.addr-drop { width: 12px; height: 8px; fill: none; stroke: #666; stroke-width: 1.500; margin-right: 5px; }
.addr-ref { width: 25px; height: 26px; border-left: 1px solid #d9d9d9; display: flex; align-items: center; justify-content: center; }
.addr-ref svg { width: 15px; height: 15px; fill: none; stroke: #777; stroke-width: 1.500; top: 0; }
.search { width: 253px; height: 28px; margin-left: 12px; border: 1px solid #d9d9d9; display: flex; align-items: center; justify-content: space-between; padding: 0 11px 2px 9px; color: #7a7a7a; }
.search svg { width: 14px; height: 14px; fill: none; stroke: #666; stroke-width: 1.400; }

.ex-body { height: 538px; flex: none; display: flex; }
.nav-pane { width: 272px; flex: none; display: flex; padding-left: 1px; padding-right: 2px; border-right: 1px solid #efefef; }
.nav-tree { list-style: none; margin: 0; padding: 0; width: 249px; flex: none; overflow: hidden; }
.n { height: 30px; line-height: 30px; display: flex; align-items: center; padding-left: 43px; white-space: nowrap; color: #111; }
.n.lat { letter-spacing: .28px; }
.n .fld { margin-right: 10px; }
.n.top { margin-top: 10px; padding-left: 32px; }
.ni { width: 18px; height: 18px; flex: none; margin: 0 6px 0 -2px; }
.ni.d { width: 16px; margin: 0 7px 0 0; }
.n.top .ni { margin: 0 5px 0 0; }
.n.sel { background: #d9d9d9; }
.vbar { width: 20px; flex: none; background: #f0f0f0; display: flex; flex-direction: column; align-items: center; }
.va { width: 12px; height: 8px; margin: 6px 0; fill: none; stroke: #666; stroke-width: 2; flex: none; }
.vthumb { width: 100%; background: #cdcdcd; flex: none; }
.nav-bar .vthumb { height: 326px; margin-top: 125px; }
.nav-bar .va:first-child { margin-bottom: 0; margin-top: 8px; }
.nav-bar .va:last-child { margin-bottom: 6px; }
.list-bar { margin-left: auto; }
.list-bar .vthumb { height: 67px; margin-top: 5px; }
.list-bar .va:last-child { margin-bottom: 6px; }
.list-bar .va:first-child { margin-bottom: 0; margin-top: 8px; }
.list { width: 963px; flex: none; display: flex; flex-direction: column; overflow: hidden; }
.heads { height: 32px; flex: none; display: flex; color: #4c607a; line-height: 32px; margin-left: 17px; }
.h { position: relative; border-right: 1px solid #e5e5e5; padding-left: 7px; height: 32px; font-family: "Noto Sans CJK SC", sans-serif; }
.h-name { width: 326px; }
.h-date { width: 180px; }
.h-type { width: 150px; }
.h-size { width: 100px; }
.sort { position: absolute; left: 158px; top: 0; width: 10px; height: 6px; fill: none; stroke: #9a9a9a; }
.rows { flex: 1; overflow: hidden; padding-top: 8px; }
.f { height: 27px; display: grid; grid-template-columns: 22px 299px 180px 1fr; align-items: center; padding-left: 29px; white-space: nowrap; }
.f-n { color: #0a1a30; letter-spacing: .26px; }
.f-n.cjk { letter-spacing: .08px; }
.f-d { color: #6d6d6d; letter-spacing: .33px; }
.f-t { color: #6d6d6d; }

.ex-status { flex: 1; display: flex; align-items: flex-start; padding: 0 6px 0 19px; }
.count { color: #33506e; line-height: 26px; padding-right: 18px; border-right: 1px solid #eee; height: 25px; margin-top: 1px; }
.vw { width: 28px; height: 29px; display: flex; align-items: center; justify-content: center; }
.vw svg { width: 18px; height: 14px; }
.vw.on { background: #c8e6f5; border: 1px solid #2ca5e0; }

.pet-tab { position: absolute; left: 1904px; top: 754px; width: 16px; height: 213px; background: #ff5555; border-radius: 12px 0 0 12px; color: #fff; font: 26px/212px "Liberation Sans", sans-serif; text-align: center; }
.lyric-en { position: absolute; left: 1463px; top: 931px; font: 26px/38px "Noto Sans", sans-serif; letter-spacing: -.2px; color: #dcb6e6; white-space: nowrap; }
.statusbar {
  position: absolute; left: 1479px; top: 997px; width: 441px; height: 33px; display: flex; align-items: center;
  padding-left: 10px; background: #1f1f1f; border: 1px solid #333; border-width: 1px 0 0 1px; border-radius: 8px 0 0 0;
  font: 15px "Noto Sans CJK SC", "Noto Sans", sans-serif; color: #9fb0bc; white-space: nowrap;
}
.lyric-zh { position: absolute; left: 87px; top: -17px; font-size: 20px; line-height: 26px; color: #dcb6e6; }
.pen { width: 18px; height: 18px; margin: 0 16px 0 17px; stroke: #9a9a9a; }
.s2 { margin-left: 9px; }
.s3 { margin-left: 14px; }

.taskbar {
  height: 50px; flex: none; display: grid; grid-template-columns: 60px 60px 469px 744px 1fr; align-items: center;
  background:
    radial-gradient(ellipse 70px 22px at 50px 2px, rgba(200,190,130,.55), transparent),
    radial-gradient(ellipse 80px 30px at 1130px 10px, rgba(150,110,20,.4), transparent),
    radial-gradient(ellipse 60px 40px at 1710px 20px, rgba(185,180,160,.6), transparent),
    linear-gradient(90deg, #7a5a1e 0, #82601f 90px, #6a4512 170px, #5a3610 270px, #3f210a 420px, #44240b 620px, #5d3d14 730px, #92712a 850px, #7d5b20 1000px, #a07f2a 1120px, #8e8a78 1210px, #917c30 1300px, #8a4d1f 1430px, #7f471a 1600px, #91592a 1660px, #a39a80 1760px, #a58c30 1860px, #a0800f 1920px);
}
.t-start { display: flex; justify-content: center; }
.t-start svg { width: 20px; height: 20px; fill: #000; }
.t-search { display: flex; justify-content: center; }
.t-search svg { width: 28px; height: 28px; }
.t-net { padding-left: 2px; font: 15px/21px "Noto Sans", sans-serif; color: #efd9b2; letter-spacing: .4px; }
.arr { font-family: "Noto Sans CJK SC", sans-serif; letter-spacing: -2px; }
.net-l { display: flex; }
.net-v { width: 64px; }
.g { color: #63e000; }
.y { color: #f7ee00; }
.t-apps { display: flex; height: 50px; }
.app-c { width: 62px; height: 50px; display: flex; align-items: center; justify-content: center; position: relative; flex: none; }
.app-c svg { width: 30px; height: 30px; }
.app-c.run::after { content: ""; position: absolute; left: 6px; right: 5px; bottom: 0; height: 3px; background: #0078d7; }
.app-c.active { background: linear-gradient(90deg, #bfae9e 0, #bfae9e 56px, #2f2010 56px, #2f2010 58px, rgba(255,255,255,.15) 58px); }
.app-c.active::after { content: ""; position: absolute; left: 1px; right: 0; bottom: 0; height: 3px; background: #0078d7; }
.pc-t { font: 700 11px "Liberation Mono", monospace; fill: #fff; }
.t-tray { display: flex; align-items: center; padding-left: 115px; height: 50px; }
.tr { flex: none; }
.plug { width: 14px; height: 24px; margin-bottom: 3px; }
.batt { width: 41px; height: 22px; margin: 0 4px 3px 1px; border: 2px solid #fff; background: #1a9c4f; position: relative; display: block; text-align: center; }
.batt::after { content: ""; position: absolute; right: -6px; top: 4px; width: 4px; height: 10px; background: #fff; }
.batt-t { font: 13px/18px "Noto Sans", sans-serif; color: #fff; display: block; }
.caret { width: 16px; height: 10px; margin: 0 0 3px 7px; }
.cloud { width: 22px; height: 20px; margin-left: 11px; }
.bat2 { width: 22px; height: 14px; margin: 0 0 3px 9px; }
.qq { width: 18px; height: 20px; margin-left: 10px; }
.wifi { width: 18px; height: 16px; margin-left: 12px; }
.snd { width: 22px; height: 18px; margin-left: 9px; }
.ime { width: 18px; margin-left: 10px; font: 18px/24px "Noto Sans CJK SC", sans-serif; color: #fff; text-shadow: 0 0 1px #000, 1px 0 0 #222, -1px 0 0 #222, 0 1px 0 #222, 0 -1px 0 #222; }
.sogou { width: 20px; height: 18px; margin-left: 17px; background: #f0521f; border-radius: 4px; color: #fff; font: 700 15px/18px "Liberation Sans", sans-serif; text-align: center; transform: rotate(-8deg); }
.clock { width: 100px; margin-left: 6px; display: flex; flex-direction: column; align-items: center; font: 15px/22px "Noto Sans", sans-serif; color: #111; }
.note { width: 20px; height: 20px; margin-left: 14px; }
```
